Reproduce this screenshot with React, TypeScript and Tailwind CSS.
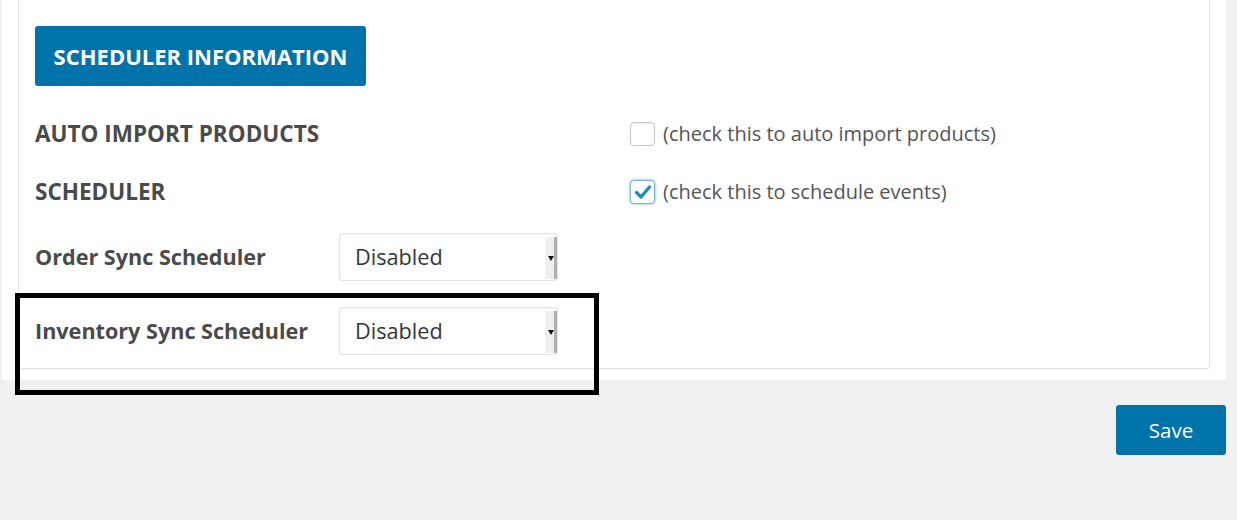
import React from 'react';

const font = { fontFamily: '"Open Sans", "Noto Sans", sans-serif' };

// Native-looking select with the old narrow arrow strip on the right
const FakeSelect: React.FC<{ value: string }> = ({ value }) => (
  <div className="relative flex h-[48px] w-[219px] items-center rounded-[3px] border border-[#e2e2e2] bg-white pl-[15px] shadow-[inset_0_1px_2px_rgba(0,0,0,0.05)]">
    <span className="text-[21.7px] text-[#32373c]">{value}</span>
    <div className="absolute right-0 top-[3px] bottom-[1px] flex w-[12px] items-center justify-start border-r-[3px] border-[#b0b0b0] bg-[#f0f0f0]">
      <svg width="6" height="5" viewBox="0 0 6 5" className="ml-[3px]">
        <path d="M0 0H6L3 5Z" fill="#111" />
      </svg>
    </div>
  </div>
);

const Checkbox: React.FC<{ checked?: boolean }> = ({ checked }) => (
  <div
    className={`flex h-[24px] w-[25px] items-center justify-center rounded-[4px] border bg-white ${
      checked
        ? 'border-[#7fb2dd] shadow-[0_0_3px_rgba(30,140,190,0.7)]'
        : 'border-[#c4c4c4] shadow-[inset_0_1px_2px_rgba(0,0,0,0.08)]'
    }`}
  >
    {checked && (
      <svg width="18" height="16" viewBox="0 0 18 16">
        <path d="M2.5 8.5L7 13L15.5 3" stroke="#1e8cbe" strokeWidth="3.4" fill="none" strokeLinecap="round" strokeLinejoin="round" />
      </svg>
    )}
  </div>
);

const App: React.FC = () => {
  return (
    <div className="relative h-[520px] w-full overflow-hidden bg-[#f1f1f1] pl-[2px]" style={font}>
      {/* Outer white panel */}
      <div className="w-[1224px] rounded-b-[3px] bg-white pb-[11px] pl-[16px]">
        {/* Inner bordered box */}
        <div className="w-[1192px] rounded-b-[3px] border border-t-0 border-[#e3e3e3] pb-[13px] pl-[16px] shadow-[0_1px_1px_rgba(0,0,0,0.04)]">
          <div className="pt-[26px]">
            <div className="flex h-[60px] w-[331px] items-center justify-center rounded-[3px] bg-[#0073aa] text-[22px] font-bold text-white">
              SCHEDULER INFORMATION
            </div>
          </div>

          {/* Checkbox rows */}
          <div className="mt-[24px] flex h-[48px] items-center">
            <div className="w-[595px] text-[22.5px] font-bold text-[#4a4a4a]">AUTO IMPORT PRODUCTS</div>
            <div className="flex items-center gap-[8px]">
              <Checkbox />
              <span className="text-[20px] text-[#555]">(check this to auto import products)</span>
            </div>
          </div>
          <div className="mt-[10px] flex h-[48px] items-center">
            <div className="w-[595px] text-[22.5px] font-bold text-[#4a4a4a]">SCHEDULER</div>
            <div className="flex items-center gap-[8px]">
              <Checkbox checked />
              <span className="text-[20px] text-[#555]">(check this to schedule events)</span>
            </div>
          </div>

          {/* Select rows */}
          <div className="mt-[17px] flex items-center">
            <div className="w-[304px] text-[21.6px] font-bold text-[#4a4a4a]">Order Sync Scheduler</div>
            <FakeSelect value="Disabled" />
          </div>
          <div className="mt-[26px] flex items-center">
            <div className="w-[304px] text-[21.6px] font-bold text-[#4a4a4a]">Inventory Sync Scheduler</div>
            <FakeSelect value="Disabled" />
          </div>
        </div>
      </div>

      {/* Save button */}
      <div className="mt-[25px] flex w-[1224px] justify-end">
        <button className="h-[50px] w-[110px] rounded-[3px] bg-[#0073aa] text-[20.5px] text-white">Save</button>
      </div>

      {/* Annotation rectangle drawn over the form */}
      <div className="pointer-events-none absolute left-[15px] top-[293px] h-[102px] w-[584px] border-[5px] border-black" />
    </div>
  );
};

export default App;
